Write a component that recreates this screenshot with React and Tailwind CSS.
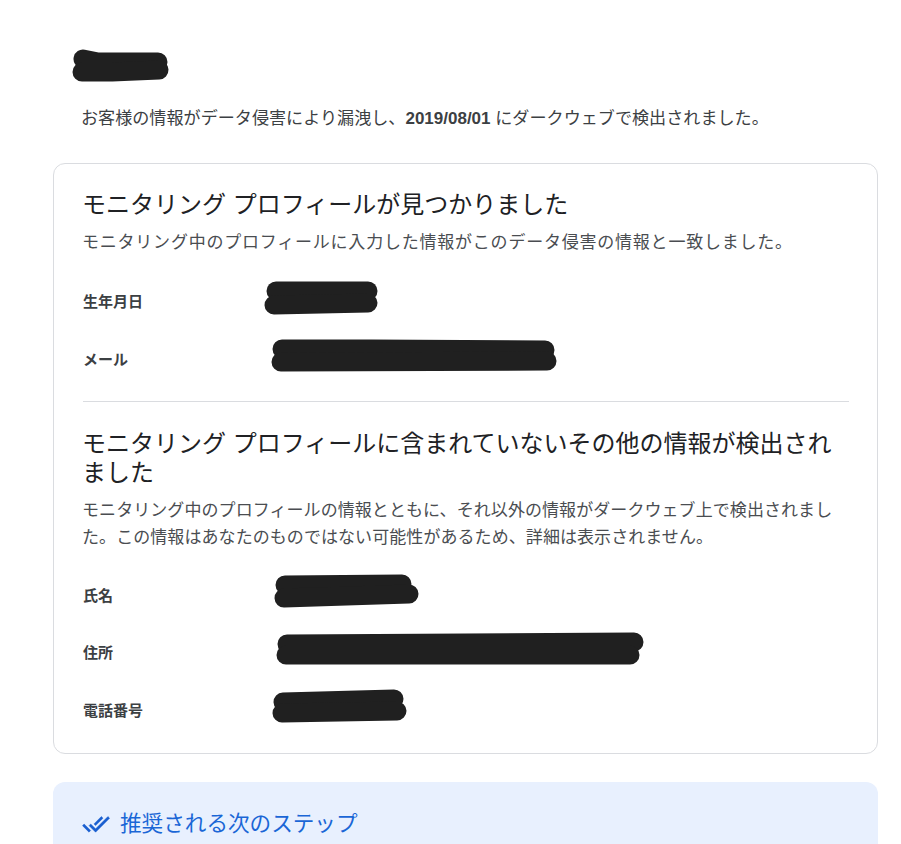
function Scribble({ width, height, lines, className = "" }) {
  return (
    <svg width={width} height={height} viewBox={`0 0 ${width} ${height}`} className={`shrink-0 ${className}`} fill="none">
      {lines.map((d, i) => (
        <path key={i} d={d} stroke="#202020" strokeWidth="19" strokeLinecap="round" strokeLinejoin="round" />
      ))}
    </svg>
  );
}

function Row({ label, scribble, tall }) {
  return (
    <div className={`flex items-center ${tall ? "h-[58px]" : "h-[57.5px]"}`}>
      <div className="w-[180px] shrink-0 text-[15px] font-bold text-[#3c4043] leading-5">{label}</div>
      {scribble}
    </div>
  );
}

export default function App() {
  return (
    <div className="h-[844px] w-[901px] overflow-hidden bg-white font-['Liberation_Sans','Noto_Sans_CJK_JP',sans-serif]">
      <div className="pt-[49px] pl-[72px]">
        <Scribble width={97} height={33} lines={["M11 10 L26 13 L86 13", "M10 23 L40 23 L87 21"]} />
      </div>
      <p className="ml-[81px] mt-[23px] text-[17.1px] leading-7 text-[#3c4043] whitespace-nowrap">
        お客様の情報がデータ侵害により漏洩し、<b className="text-[17px]">2019/08/01</b> にダークウェブで検出されました。
      </p>
      <div className="ml-[53px] mt-[30px] w-[825px] h-[591px] rounded-xl border border-[#dadce0] pt-[24px] px-[28px]">
        <h2 className="text-[24px] leading-[34px] text-[#202124] font-normal">モニタリング プロフィールが見つかりました</h2>
        <p className="mt-[7px] text-[17px] tracking-[0.78px] leading-[28px] text-[#4a4d51]">
          モニタリング中のプロフィールに入力した情報がこのデータ侵害の情報と一致しました。
        </p>
        <div className="mt-[16px] pl-px">
          <Row tall label="生年月日" scribble={<Scribble width={116} height={34} className="mb-[9px]" lines={["M13 10 L105 10", "M11 24 L105 22"]} />} />
          <Row tall label="メール" scribble={<Scribble width={286} height={33} className="ml-[8px] mb-[9px]" lines={["M11 10 L100 10 L274 11", "M10 23 L276 22"]} />} />
        </div>
        <div className="ml-px mt-[12px] h-px bg-[#dadce0]" />
        <h2 className="mt-[27px] text-[24px] leading-[29px] text-[#202124] font-normal">
          モニタリング プロフィールに含まれていないその他の情報が検出されました
        </h2>
        <p className="mt-[10px] text-[17px] tracking-[0.07px] leading-[27px] text-[#4a4d51]">
          モニタリング中のプロフィールの情報とともに、それ以外の情報がダークウェブ上で検出されました。この情報はあなたのものではない可能性があるため、詳細は表示されません。
        </p>
        <div className="mt-[16px] pl-px">
          <Row label="氏名" scribble={<Scribble width={146} height={34} className="ml-[11px] mb-[9px]" lines={["M11 11 L128 10", "M10 24 L135 20"]} />} />
          <Row label="住所" scribble={<Scribble width={369} height={34} className="ml-[13px] mb-[9px]" lines={["M11 12 L358 10", "M10 23 L354 23"]} />} />
          <Row label="電話番号" scribble={<Scribble width={136} height={34} className="ml-[9px] mb-[9px]" lines={["M11 13 L122 10", "M10 24 L125 22"]} />} />
        </div>
      </div>
      <div className="ml-[53px] mt-[28px] w-[825px] h-[200px] rounded-xl bg-[#e8f0fe] pt-[25px] pl-[29px]">
        <div className="flex items-center gap-[10px]">
          <svg width="28" height="28" viewBox="0 0 24 24" fill="#1a5fd0" stroke="#1a5fd0" strokeWidth="0.4" className="shrink-0">
            <path d="M18 7l-1.41-1.41-6.34 6.34 1.41 1.41L18 7zm4.24-1.41L11.66 16.17 7.48 12l-1.41 1.41L11.66 19l12-12-1.42-1.41zM.41 13.41L6 19l1.41-1.41L1.83 12 .41 13.41z" />
          </svg>
          <h2 className="text-[21.6px] leading-[34px] text-[#1a66d6] font-normal">推奨される次のステップ</h2>
        </div>
      </div>
    </div>
  );
}
